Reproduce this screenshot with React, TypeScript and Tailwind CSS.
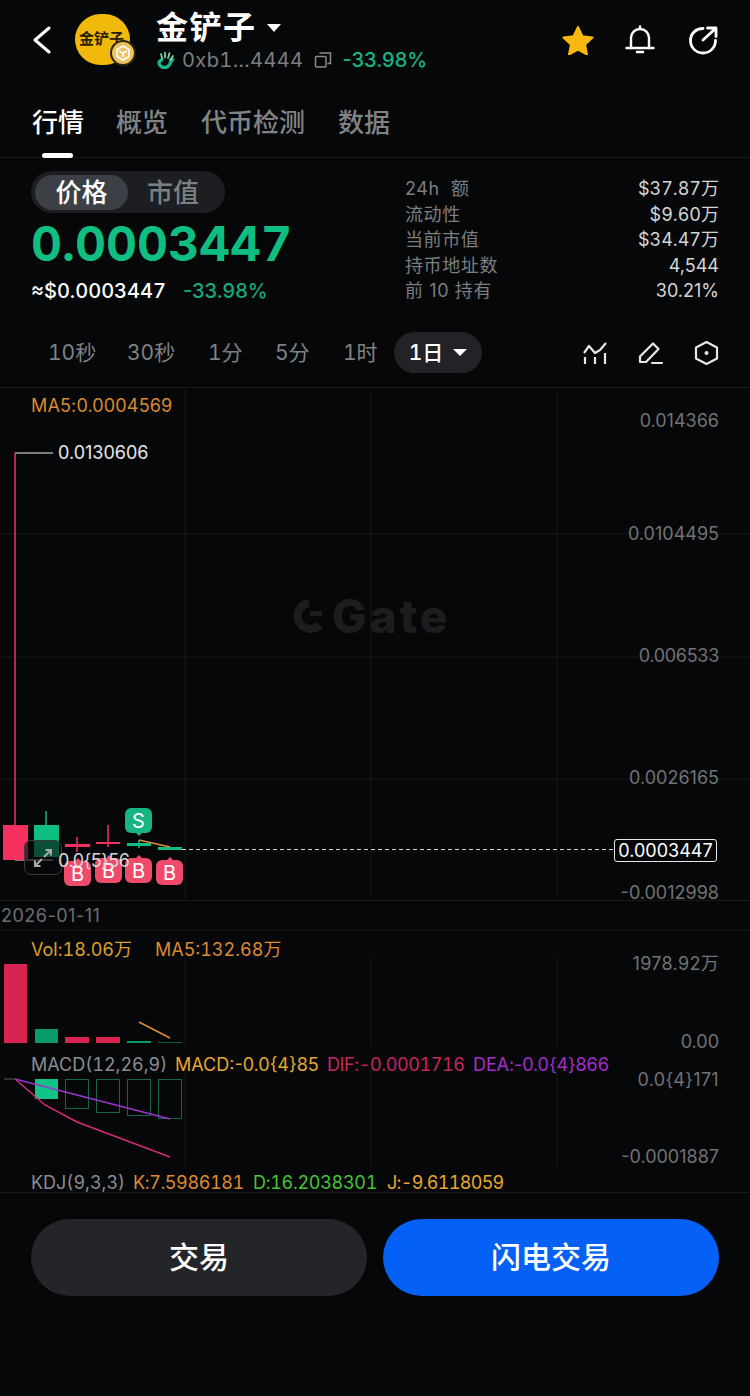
const stats = [
  { label: "24h  额", value: "$37.87万", num: "tabular-nums" },
  { label: "流动性", value: "$9.60万", num: "tabular-nums" },
  { label: "当前市值", value: "$34.47万", num: "tabular-nums" },
  { label: "持币地址数", value: "4,544", num: "" },
  { label: "前 10 持有", value: "30.21%", num: "" },
];

const ranges = [
  { label: "10秒", cls: "w-[79px]" },
  { label: "30秒", cls: "w-[81px]" },
  { label: "1分", cls: "w-[67px]" },
  { label: "5分", cls: "w-[68px]" },
  { label: "1时", cls: "w-[51px]" },
];

function Badge({ text, x, y, up }: { text: string; x: string; y: string; up?: boolean }) {
  return (
    <div className={`absolute ${x} ${y} flex h-[25px] w-[27px] items-center justify-center rounded-[6px] text-[20px] leading-none text-white ${up ? "bg-[#17b583]" : "bg-[#ee4a69]"}`}>
      {text}
      <span className={`absolute left-[10px] h-0 w-0 border-x-[4px] border-x-transparent ${up ? "top-[24px] border-t-[4px] border-t-[#17b583]" : "top-[-3px] border-b-[4px] border-b-[#ee4a69]"}`} />
    </div>
  );
}

function AxisLabel({ y, children, wide }: { y: string; children: React.ReactNode; wide?: boolean }) {
  return <div className={`absolute right-[31px] ${y} text-[18px] leading-[22px] text-[#707376] ${wide ? "tracking-[0.3px]" : ""}`}>{children}</div>;
}

export default function App() {
  return (
    <div className="flex h-[1396px] w-[750px] flex-col overflow-hidden bg-[#060708] font-['Inter','Noto_Sans_CJK_SC',sans-serif] text-white">
      {/* header */}
      <div className="flex h-[92px] items-center pb-[12px] pl-[32px] pr-[31px]">
        <svg width="20" height="28" viewBox="0 0 20 28" fill="none" stroke="#fff" strokeWidth="3" strokeLinecap="round" strokeLinejoin="round">
          <path d="M17 2 3 14l14 12" />
        </svg>
        <div className="relative ml-[23px] h-[52px] w-[56px]">
          <div className="flex h-[51px] w-[55px] items-center justify-center rounded-full bg-[#f0b90b] pb-[2px] pr-[2px] text-[15px] font-bold leading-none text-[#2a2000]">金铲子</div>
          <div className="absolute left-[35px] top-[26px] flex h-[26px] w-[26px] items-center justify-center rounded-full border-2 border-[#2a2308] bg-[#ecc260]">
            <svg width="18" height="18" viewBox="0 0 18 18" fill="none" stroke="#fff" strokeWidth="1.6" strokeLinejoin="round">
              <path d="M9 2 15 5.5v7L9 16l-6-3.5v-7Z" />
              <path d="M5 7l4 2.2L13 7M9 9.2V13" />
            </svg>
          </div>
        </div>
        <div className="ml-[25px] flex flex-col">
          <div className="flex h-[34px] items-center pt-[5px]">
            <span className="text-[32px] font-semibold leading-none tracking-[1.5px]">金铲子</span>
            <span className="ml-[10px] h-0 w-0 border-x-[7px] border-t-[8px] border-x-transparent border-t-white" />
          </div>
          <div className="mt-[5px] flex h-[24px] items-center">
            <svg width="19" height="19" viewBox="0 0 19 19" fill="none" strokeLinecap="round">
              <path d="M6 9.5 3 12c0 3.5 2.5 5.5 5.5 5.5 3 0 5-2 6-5l2-3" stroke="#18b58a" strokeWidth="3.4" />
              <path d="M6 8 5 4M9 7.5V2.5M12 8l1.5-5M14 10l3-4" stroke="#7fe0a8" strokeWidth="1.7" />
            </svg>
            <span className="ml-[7px] text-[20px] leading-none tracking-[0.4px] tabular-nums text-[#7c7f82]">0xb1...4444</span>
            <svg className="ml-[10px]" width="18" height="18" viewBox="0 0 18 18" fill="none" stroke="#8a8d90" strokeWidth="1.5">
              <rect x="1.5" y="5.5" width="10.5" height="10.5" rx="1" />
              <path d="M5.5 2h11v10.5h-3" />
            </svg>
            <span className="ml-[11px] text-[20px] font-medium leading-none text-[#17b583]">-33.98%</span>
          </div>
        </div>
        <div className="ml-auto flex items-center">
          <svg width="34" height="30" viewBox="0 0 34 30" fill="#f8b90e" stroke="#f8b90e" strokeWidth="2" strokeLinejoin="round">
            <path d="M17 2l4.4 9.3 10.2 1.3-7.5 7 1.9 9.9L17 24.7l-9 4.8 1.9-9.9-7.5-7 10.2-1.3Z" />
          </svg>
          <svg className="ml-[30px]" width="30" height="30" viewBox="0 0 30 30" fill="none" stroke="#fff" strokeWidth="2.4" strokeLinecap="round">
            <path d="M6 23V13c0-5 4-9 9-9s9 4 9 9v10" />
            <path d="M1.5 23h27M15 1.5v2" />
            <path d="M12 27h6" strokeWidth="2.6" />
          </svg>
          <svg className="ml-[33px] mr-[1px]" width="30" height="30" viewBox="0 0 30 30" fill="none" stroke="#fff" strokeWidth="2.8" strokeLinecap="round" strokeLinejoin="round">
            <path d="M15 3.5C8 3.5 2.5 8.5 2.5 15.5S8 28 15 28s12.5-5.5 12.5-12.5" />
            <path d="M15 15 27 4M19.5 3H28v8.5" />
          </svg>
        </div>
      </div>

      {/* tabs */}
      <div className="relative flex h-[66px] items-start border-b border-[#16181a] pl-[32px] pt-[14px] text-[26px] font-medium leading-[34px] text-[#808386]">
        <span className="w-[84px] text-white">行情</span>
        <span className="w-[85px]">概览</span>
        <span className="w-[137px]">代币检测</span>
        <span>数据</span>
        <span className="absolute bottom-[-1px] left-[42px] h-[5px] w-[31px] rounded-full bg-white" />
      </div>

      {/* price + stats */}
      <div className="flex h-[160px] pl-[31px] pr-[31px] pt-[13px]">
        <div className="flex w-[374px] flex-col">
          <div className="flex h-[42px] w-[194px] items-center rounded-full bg-[#1c1e21] px-[4px]">
            <div className="flex h-[35px] w-[93px] items-center justify-center rounded-full bg-[#3c4046] text-[26px] font-medium text-white">价格</div>
            <div className="flex flex-1 items-center justify-center pr-[3px] text-[26px] font-medium text-[#7d8083]">市值</div>
          </div>
          <div className="mt-[4px] h-[54px] text-[48px] font-bold leading-[54px] tabular-nums text-[#0fbe80]">0.0003447</div>
          <div className="mt-[8px] flex items-center text-[20px] font-medium leading-[24px]">
            <span className="w-[152px] tabular-nums">≈$0.0003447</span>
            <span className="text-[#17a97b]">-33.98%</span>
          </div>
        </div>
        <div className="flex flex-1 flex-col pt-[5px] text-[18px] leading-[25.5px]">
          {stats.map((s) => (
            <div key={s.label} className="flex justify-between">
              <span className="whitespace-pre tracking-[0.6px] text-[#7b7e81]">{s.label}</span>
              <span className={`${s.num} text-[#d4d5d6]`}>{s.value}</span>
            </div>
          ))}
        </div>
      </div>

      {/* time ranges */}
      <div className="flex h-[70px] items-start border-b border-[#16181a] pl-[48px] pr-[31px] pt-[14px]">
        <div className="flex h-[41px] items-center text-[21px] tabular-nums text-[#7f8285]">
          {ranges.map((r) => (
            <span key={r.label} className={`${r.cls} whitespace-nowrap`}>{r.label}</span>
          ))}
        </div>
        <div className="flex h-[41px] w-[88px] items-center justify-center gap-[10px] rounded-full bg-[#212326] text-[21px] font-medium tabular-nums">
          1日
          <span className="h-0 w-0 border-x-[7px] border-t-[7px] border-x-transparent border-t-white" />
        </div>
        <div className="ml-auto flex h-[41px] items-center gap-[30px]">
          <svg width="26" height="24" viewBox="0 0 26 24" fill="none" stroke="#e8e8e8" strokeWidth="2.2" strokeLinejoin="round">
            <path d="M2 12 7 5l6 7 5-3 6-7" />
            <path d="M3 16v7M13 16v7M23 12v11" />
          </svg>
          <svg width="26" height="24" viewBox="0 0 26 24" fill="none" stroke="#e8e8e8" strokeWidth="2.2" strokeLinejoin="round" strokeLinecap="round">
            <path d="M2 21V15.5L15 2.5l5.5 5.5L8 21Z" />
            <path d="M14 22h10" />
          </svg>
          <svg width="25" height="26" viewBox="0 0 25 26" fill="none" stroke="#e8e8e8" strokeWidth="2.2" strokeLinejoin="round">
            <path d="M12.5 2 23 7.5v11L12.5 24 2 18.5v-11Z" />
            <circle cx="12.5" cy="13" r="2" fill="#e8e8e8" stroke="none" />
          </svg>
        </div>
      </div>

      {/* main chart */}
      <div className="relative h-[513px] border-b border-[#16181a]">
        <svg className="absolute inset-0" width="750" height="512" viewBox="0 388 750 512" fill="none">
          <path d="M185 388V900M371 388V900M557 388V900M0 534H750M0 657H750M0 779H750" stroke="#16181a" />
          <path d="M15 860H53M15 453H53" stroke="#f2f2f2" />
          <path d="M15 453V825" stroke="#f6305f" strokeWidth="1.5" />
          <rect x="3" y="825" width="25" height="35" fill="#f6305f" />
          <path d="M46 811V825" stroke="#10b981" strokeWidth="1.5" />
          <rect x="34" y="825" width="25" height="32" fill="#0fbe80" />
          <path d="M77 837V852M108 825V847" stroke="#f6305f" strokeWidth="1.5" />
          <rect x="65" y="844" width="25" height="3" fill="#f6305f" />
          <rect x="96" y="842" width="24" height="2" fill="#f6305f" />
          <path d="M139 840V848" stroke="#0fbe80" strokeWidth="1.5" />
          <rect x="127" y="843" width="24" height="3" fill="#0fbe80" />
          <rect x="158" y="847" width="24" height="3" fill="#0fbe80" />
          <path d="M139 840 170 847" stroke="#e08a33" strokeWidth="1.5" />
          <path d="M182 849.5H614" stroke="#d8d8d8" strokeDasharray="4 3" />
        </svg>
        {/* watermark */}
        <div className="absolute left-[291px] top-[205px] flex items-center gap-[5px] text-[46px] font-extrabold leading-[46px] tracking-[3px] text-[#1c1d1f]">
          <svg width="36" height="36" viewBox="0 0 36 36" fill="none">
            <path d="M29 27A13 13 0 1 1 18 5" stroke="#1c1d1f" strokeWidth="8" />
            <path d="M19 18h12v-5H19Z" fill="#1c1d1f" />
          </svg>
          Gate
        </div>
        <div className="absolute left-[31px] top-[7px] text-[18px] leading-[22px] tracking-[0.15px] text-[#d98a2e]">MA5:0.0004569</div>
        <div className="absolute left-[58px] top-[54px] text-[18px] leading-[22px] text-[#e8e8e8]">0.0130606</div>
        <AxisLabel y="top-[22px]">0.014366</AxisLabel>
        <AxisLabel y="top-[135px]">0.0104495</AxisLabel>
        <div className="absolute right-[31px] top-[257px] text-[18px] leading-[22px] tracking-[-0.3px] text-[#707376]">0.006533</div>
        <AxisLabel y="top-[379px]">0.0026165</AxisLabel>
        <AxisLabel y="top-[494px]">-0.0012998</AxisLabel>
        <div className="absolute left-[614px] top-[451px] flex h-[23px] w-[103px] items-center justify-center rounded-[3px] border border-[#e8e8e8] bg-[#060708] text-[18px] leading-none">0.0003447</div>
        <div className="absolute left-[24px] top-[452px] flex h-[35px] w-[38px] items-center justify-center rounded-[7px] border border-[#3a3c3e] bg-[#060708]/60">
          <svg width="20" height="20" viewBox="0 0 20 20" fill="none" stroke="#a9abad" strokeWidth="2">
            <path d="M11 9l7-7M12.5 2H18v5.5M9 11l-7 7M7.5 18H2v-5.5" />
          </svg>
        </div>
        <Badge text="S" x="left-[125px]" y="top-[420px]" up />
        <Badge text="B" x="left-[64px]" y="top-[473px]" />
        <Badge text="B" x="left-[95px]" y="top-[470px]" />
        <Badge text="B" x="left-[125px]" y="top-[470px]" />
        <Badge text="B" x="left-[156px]" y="top-[472px]" />
        <div className="absolute left-[58px] top-[462px] text-[18px] leading-[22px] tracking-[-0.5px] text-[#d8d8d8]">0.0{"{5}"}56</div>
      </div>

      {/* date */}
      <div className="flex h-[30px] items-center border-b border-[#121416] pl-[1px] pt-[1px] text-[18px] leading-none tracking-[0.5px] text-[#6c6f72]">2026-01-11</div>

      {/* volume */}
      <div className="relative h-[115px]">
        <svg className="absolute inset-0" width="750" height="115" viewBox="0 930 750 115" fill="none">
          <path d="M185 956V1045M371 956V1045M557 956V1045" stroke="#16181a" />
          <rect x="4" y="963" width="23" height="79" fill="#d92350" />
          <rect x="35" y="1028" width="23" height="14" fill="#079a6b" />
          <rect x="65" y="1036" width="24" height="6" fill="#d92350" />
          <rect x="96" y="1036" width="24" height="6" fill="#d92350" />
          <rect x="127" y="1040" width="24" height="2" fill="#079a6b" />
          <rect x="158" y="1041" width="24" height="1" fill="#0b5a41" />
          <path d="M139 1021 170 1037" stroke="#e08a33" strokeWidth="1.5" />
        </svg>
        <div className="absolute left-[31px] top-[8px] text-[18px] leading-[22px] tabular-nums text-[#dca02c]">Vol:18.06万</div>
        <div className="absolute left-[155px] top-[8px] text-[18px] leading-[22px] tabular-nums text-[#dd8a33]">MA5:132.68万</div>
        <AxisLabel y="top-[22px]" wide>1978.92万</AxisLabel>
        <AxisLabel y="top-[100px]">0.00</AxisLabel>
      </div>

      {/* macd */}
      <div className="relative h-[120px]">
        <svg className="absolute inset-0" width="750" height="120" viewBox="0 1045 750 120" fill="none">
          <path d="M185 1060V1165M371 1060V1165M557 1060V1165" stroke="#16181a" />
          <path d="M4 1078H15" stroke="#5a5d60" />
          <rect x="35" y="1078" width="23" height="20" fill="#0fc484" />
          <g stroke="#17644b">
            <rect x="65.5" y="1078.5" width="23" height="29" />
            <rect x="96.5" y="1078.5" width="23" height="33" />
            <rect x="127.5" y="1078.5" width="23" height="36" />
            <rect x="158.5" y="1078.5" width="23" height="39" />
          </g>
          <path d="M15 1078 170 1118" stroke="#9f35d0" strokeWidth="1.5" />
          <path d="M15 1078 45 1104 77 1121 170 1156" stroke="#d62a7c" strokeWidth="1.5" />
        </svg>
        <div className="absolute left-[31px] top-[8px] flex whitespace-nowrap text-[18px] leading-[22px]">
          <span className="w-[144px] tabular-nums text-[#8a8d90]">MACD(12,26,9)</span>
          <span className="w-[152px] text-[#e8a72d]">MACD:-0.0{"{4}"}85</span>
          <span className="w-[146px] tracking-[-0.4px] tabular-nums text-[#c8245e]">DIF:-0.0001716</span>
          <span className="tracking-[-0.1px] text-[#a52ccb]">DEA:-0.0{"{4}"}866</span>
        </div>
        <AxisLabel y="top-[23px]" wide>0.0{"{4}"}171</AxisLabel>
        <AxisLabel y="top-[100px]">-0.0001887</AxisLabel>
      </div>

      {/* kdj */}
      <div className="flex h-[27px] items-center whitespace-nowrap border-b border-[#16181a] pl-[31px] pt-[8px] text-[18px] leading-none tabular-nums">
        <span className="w-[102px] text-[#8a8d90]">KDJ(9,3,3)</span>
        <span className="w-[120px] tracking-[-0.4px] text-[#dd8a33]">K:7.5986181</span>
        <span className="w-[134px] tracking-[-0.3px] text-[#46c43a]">D:16.2038301</span>
        <span className="tracking-[-0.7px] text-[#e8a72d]">J:-9.6118059</span>
      </div>

      {/* actions */}
      <div className="flex gap-[16px] px-[31px] pt-[26px]">
        <button className="flex h-[77px] flex-1 items-center justify-center rounded-full bg-[#232528] text-[30px] font-medium text-white">交易</button>
        <button className="flex h-[77px] flex-1 items-center justify-center rounded-full bg-[#0560f5] text-[30px] font-medium text-white">闪电交易</button>
      </div>
    </div>
  );
}
